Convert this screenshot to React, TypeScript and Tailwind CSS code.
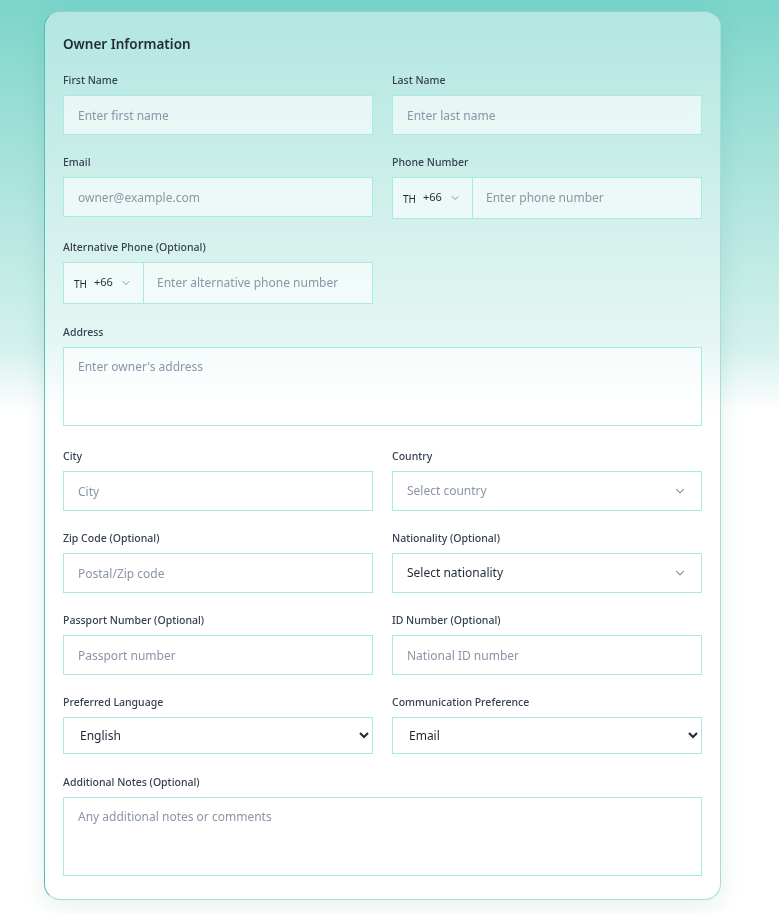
import { ChevronDown } from 'lucide-react';

// 입력 필드 공통 스타일
const inputCls =
    'w-full h-[40px] px-[14px] border border-[#a6ece3] bg-white/60 text-[12px] text-[#1f2937] placeholder:text-[#8a95a6] outline-none';

function Label({ children }: { children: React.ReactNode }) {
    return <label className="block text-[10.5px] font-medium text-[#374151] leading-[16px] mb-[7px]">{children}</label>;
}

function Field({ label, placeholder }: { label: string; placeholder: string }) {
    return (
        <div>
            <Label>{label}</Label>
            <input className={inputCls} placeholder={placeholder} />
        </div>
    );
}

function PhoneField({ label, placeholder }: { label: string; placeholder: string }) {
    return (
        <div>
            <Label>{label}</Label>
            <div className="flex h-[42px] border border-[#a6ece3] bg-white/60">
                <div className="w-[80px] shrink-0 flex items-center pl-[10px] gap-[7px] border-r border-[#a6ece3] text-[#1f2937]">
                    <span className="text-[10px] mt-[3px]">TH</span>
                    <span className="text-[11px] -mt-[2px]">+66</span>
                    <ChevronDown className="w-3 h-3 text-[#6b7280] -mt-[1px]" strokeWidth={1.5} />
                </div>
                <input
                    className="flex-1 min-w-0 px-[13px] bg-transparent text-[12px] placeholder:text-[#8a95a6] outline-none"
                    placeholder={placeholder}
                />
            </div>
        </div>
    );
}

function FakeSelect({ label, text, muted }: { label: string; text: string; muted?: boolean }) {
    return (
        <div>
            <Label>{label}</Label>
            <div className="h-[40px] px-[14px] border border-[#a6ece3] bg-white/60 flex items-center justify-between">
                <span className={`text-[12px] ${muted ? 'text-[#8a95a6]' : 'text-[#1f2937]'}`}>{text}</span>
                <ChevronDown className="w-3.5 h-3.5 text-[#6b7280]" strokeWidth={1.75} />
            </div>
        </div>
    );
}

function NativeSelect({ label, options }: { label: string; options: string[] }) {
    return (
        <div>
            <Label>{label}</Label>
            <select className="w-full h-[37px] pl-[12px] pr-[2px] border border-[#a6ece3] bg-white text-[12px] text-[#1f2937] outline-none">
                {options.map((o) => (
                    <option key={o}>{o}</option>
                ))}
            </select>
        </div>
    );
}

function Area({ label, placeholder }: { label: string; placeholder: string }) {
    return (
        <div>
            <Label>{label}</Label>
            <textarea
                className="block w-full h-[79px] px-[14px] py-[10px] border border-[#a6ece3] bg-white/60 text-[12px] placeholder:text-[#8a95a6] outline-none resize-none"
                placeholder={placeholder}
            />
        </div>
    );
}

export default function App() {
    return (
        <div
            className="min-h-[913px] pt-[11px] pb-[14px] bg-gradient-to-b from-[#7bd5ca] via-[#d4f1ed] via-38% to-white to-45%"
            style={{ fontFamily: '"Noto Sans", "Open Sans", sans-serif' }}
        >
            <div className="ml-[44px] w-[677px] rounded-[16px] border border-[#a9dcd7] border-l-[#52bfb2] border-t-[#8fd3cb] bg-white/40 backdrop-blur-md shadow-[0_4px_24px_rgba(20,120,110,0.12)] px-[18px] pt-[22px] pb-[23px]">
                <h2 className="text-[13.5px] font-semibold text-[#1f2937] leading-[20px] mb-[18px]">Owner Information</h2>

                <div className="grid grid-cols-2 gap-x-[19px] gap-y-[19px]">
                    <Field label="First Name" placeholder="Enter first name" />
                    <Field label="Last Name" placeholder="Enter last name" />
                    <Field label="Email" placeholder="owner@example.com" />
                    <PhoneField label="Phone Number" placeholder="Enter phone number" />
                    <div className="mt-[1px]">
                        <PhoneField label="Alternative Phone (Optional)" placeholder="Enter alternative phone number" />
                    </div>
                    <div />
                    <div className="col-span-2 mt-[1px]">
                        <Area label="Address" placeholder="Enter owner's address" />
                    </div>
                    <div className="mt-[3px]">
                        <Field label="City" placeholder="City" />
                    </div>
                    <div className="mt-[3px]">
                        <FakeSelect label="Country" text="Select country" muted />
                    </div>
                    <Field label="Zip Code (Optional)" placeholder="Postal/Zip code" />
                    <FakeSelect label="Nationality (Optional)" text="Select nationality" />
                    <Field label="Passport Number (Optional)" placeholder="Passport number" />
                    <Field label="ID Number (Optional)" placeholder="National ID number" />
                    <NativeSelect label="Preferred Language" options={['English', 'Thai']} />
                    <NativeSelect label="Communication Preference" options={['Email', 'Phone', 'SMS']} />
                    <div className="col-span-2 mt-[1px]">
                        <Area label="Additional Notes (Optional)" placeholder="Any additional notes or comments" />
                    </div>
                </div>
            </div>
        </div>
    );
}
